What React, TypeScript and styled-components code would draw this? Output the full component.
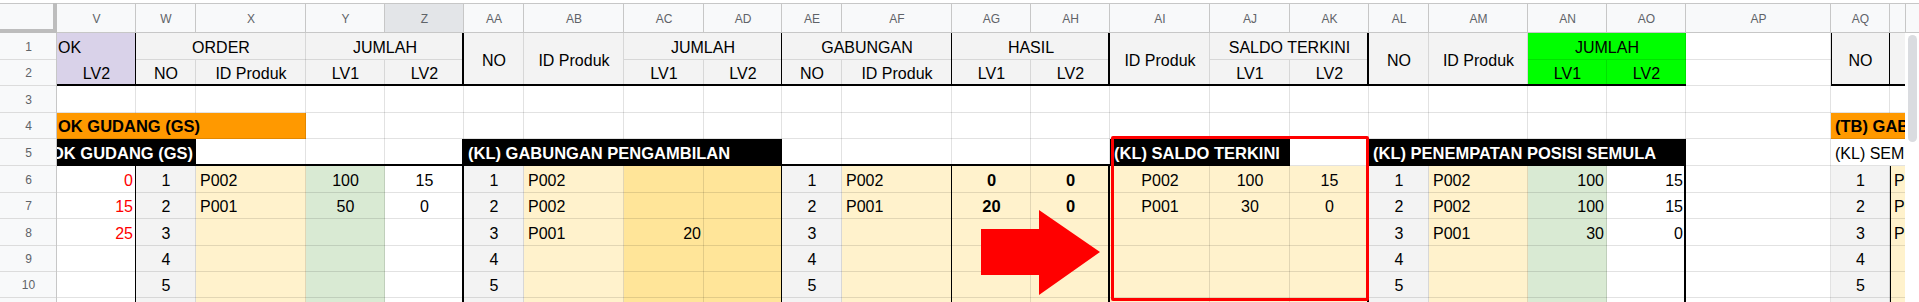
import React from 'react';
import styled, { createGlobalStyle } from 'styled-components';

const GlobalStyle = createGlobalStyle`
  html, body { margin: 0; padding: 0; background: #fff; }
  body { font-family: "Liberation Sans", Arial, sans-serif; }
  * { box-sizing: border-box; }
`;

type Edge = 'grid' | 'none' | 'line' | 'thick';
type Align = 'left' | 'center' | 'right';

interface Spec {
  col: string;
  span?: number;
  rspan?: number;
  text?: string;
  bg?: string;
  align?: Align;
  bold?: boolean;
  color?: string;
  r?: Edge;
  b?: Edge;
  l?: Edge;
  middle?: boolean;
  shift?: number;
}

const C = {
  head: '#f3f3f3',
  purple: '#d9d2e9',
  orange: '#ff9900',
  yellow: '#fff2cc',
  gold: '#ffe599',
  mint: '#d9ead3',
  lime: '#00ff00',
  black: '#000000',
  white: '#ffffff',
  red: '#ff0000',
};

const COLS: [string, number][] = [
  ['V', 79], ['W', 60], ['X', 110], ['Y', 79], ['Z', 79],
  ['AA', 60], ['AB', 100], ['AC', 80], ['AD', 78],
  ['AE', 60], ['AF', 110], ['AG', 79], ['AH', 79],
  ['AI', 100], ['AJ', 80], ['AK', 79],
  ['AL', 60], ['AM', 99], ['AN', 79], ['AO', 79],
  ['AP', 145], ['AQ', 59], ['AR', 100],
];
const ROW_HEIGHTS = [27, 26, 27, 26, 27, 27, 26, 27, 26, 26, 26];

const COL_TEMPLATE = ['57px', ...COLS.map(([, w]) => `${w}px`)].join(' ');
const ROW_TEMPLATE = ['30px', ...ROW_HEIGHTS.map((h) => `${h}px`)].join(' ');

const GRID_LINE = 'rgba(0,0,0,0.115)';

function gridShadow(r: Edge, b: Edge): string {
  const s: string[] = [];
  if (r === 'grid') s.push(`inset -1px 0 0 ${GRID_LINE}`);
  if (b === 'grid') s.push(`inset 0 -1px 0 ${GRID_LINE}`);
  return s.length ? s.join(', ') : 'none';
}

function edgeShadow(r: Edge, b: Edge, l: Edge): string {
  const s: string[] = [];
  if (r === 'thick') s.push('1px 0 0 0 #000', 'inset -2px 0 0 #000');
  if (b === 'thick') s.push('0 1px 0 0 #000', 'inset 0 -2px 0 #000');
  if (l === 'thick') s.push('-2px 0 0 0 #000', 'inset 1px 0 0 #000');
  if (r === 'line') s.push('inset -1px 0 0 #000');
  if (l === 'line') s.push('inset 1px 0 0 #000');
  return s.length ? s.join(', ') : 'none';
}

const Page = styled.div`
  width: 1919px;
  height: 302px;
  overflow: hidden;
  background: #fff;
  display: flex;
  flex-direction: column;
  font-family: "Liberation Sans", Arial, sans-serif;
`;

const TopStrip = styled.div`
  height: 3px;
  flex: none;
  background: #fff;
`;

const Body = styled.div`
  display: flex;
  flex: 1;
  min-height: 0;
`;

const Viewport = styled.div`
  position: relative;
  width: 1905px;
  flex: none;
  overflow: hidden;
`;

const SheetGrid = styled.div`
  display: grid;
  grid-template-columns: ${COL_TEMPLATE};
  grid-template-rows: ${ROW_TEMPLATE};
  width: max-content;
`;

const Corner = styled.div`
  background: #f8f9fa;
  box-shadow: inset -4px 0 0 #bdbdbd, inset 0 -4px 0 #bdbdbd, inset 0 1px 0 #c7c7c7;
`;

const ColHead = styled.div<{ $active: boolean }>`
  background: ${(p) => (p.$active ? '#e3e5e8' : '#f8f9fa')};
  color: #5f6368;
  font-size: 12px;
  display: flex;
  align-items: center;
  justify-content: center;
  padding-top: 2px;
  box-shadow: inset -1px 0 0 #c7c7c7, inset 0 -1px 0 #c7c7c7, inset 0 1px 0 #c7c7c7;
`;

const RowHead = styled.div`
  background: #f8f9fa;
  color: #5f6368;
  font-size: 12px;
  display: flex;
  align-items: center;
  justify-content: center;
  box-shadow: inset -1px 0 0 #c7c7c7, inset 0 -1px 0 #dcdcdc;
`;

interface CellProps {
  $span: number;
  $rspan: number;
  $bg: string;
  $align: Align;
  $bold: boolean;
  $color: string;
  $middle: boolean;
  $grid: string;
  $edge: string;
}

const Cell = styled.div<CellProps>`
  grid-column: span ${(p) => p.$span};
  grid-row: span ${(p) => p.$rspan};
  position: relative;
  display: flex;
  align-items: ${(p) => (p.$middle ? 'center' : 'flex-end')};
  justify-content: ${(p) =>
    p.$align === 'left' ? 'flex-start' : p.$align === 'right' ? 'flex-end' : 'center'};
  padding: ${(p) => (p.$middle ? '2px' : '0')} ${(p) => (p.$align === 'right' ? '3px' : '4px')}
    ${(p) => (p.$middle ? '0' : '3px')} 4px;
  overflow: hidden;
  white-space: nowrap;
  background: ${(p) => p.$bg};
  color: ${(p) => p.$color};
  font-size: ${(p) => (p.$bold ? '16.5px' : '16px')};
  font-weight: ${(p) => (p.$bold ? 700 : 400)};
  box-shadow: ${(p) => p.$grid};

  &::after {
    content: '';
    position: absolute;
    inset: 0;
    z-index: 2;
    pointer-events: none;
    box-shadow: ${(p) => p.$edge};
  }
`;

const CellText = styled.span<{ $shift: number }>`
  flex: none;
  margin-left: ${(p) => p.$shift}px;
  line-height: normal;
`;

const RedFrame = styled.div`
  position: absolute;
  left: 1111px;
  top: 133px;
  width: 258px;
  height: 165px;
  border: 3px solid #ff0000;
  border-radius: 2px;
  z-index: 5;
  pointer-events: none;
`;

const ArrowMark = styled.svg`
  position: absolute;
  left: 981px;
  top: 207px;
  z-index: 5;
  pointer-events: none;
`;

const ScrollColumn = styled.div`
  width: 14px;
  flex: none;
  display: flex;
  flex-direction: column;
  background: #fff;
`;

const ScrollHead = styled.div`
  height: 30px;
  flex: none;
  background: #f8f9fa;
  box-shadow: inset 1px 0 0 #c7c7c7, inset 0 -1px 0 #c7c7c7, inset 0 1px 0 #c7c7c7;
`;

const ScrollTrack = styled.div`
  flex: 1;
  padding: 2px 2px 0 3px;
`;

const ScrollThumb = styled.div`
  height: 107px;
  border-radius: 5px;
  background: #dadce0;
`;

/* ---------- sheet content ---------- */

const ROW_SPECS: Record<number, Spec[]> = {
  1: [
    { col: 'V', text: 'OK', bg: C.purple, align: 'left', shift: -3, r: 'line', b: 'none' },
    { col: 'W', span: 2, text: 'ORDER', bg: C.head },
    { col: 'Y', span: 2, text: 'JUMLAH', bg: C.head, r: 'thick' },
    { col: 'AA', rspan: 2, text: 'NO', bg: C.head, middle: true, b: 'thick' },
    { col: 'AB', rspan: 2, text: 'ID Produk', bg: C.head, middle: true, b: 'thick' },
    { col: 'AC', span: 2, text: 'JUMLAH', bg: C.head, r: 'line' },
    { col: 'AE', span: 2, text: 'GABUNGAN', bg: C.head, r: 'line' },
    { col: 'AG', span: 2, text: 'HASIL', bg: C.head, r: 'thick' },
    { col: 'AI', rspan: 2, text: 'ID Produk', bg: C.head, middle: true, b: 'thick' },
    { col: 'AJ', span: 2, text: 'SALDO TERKINI', bg: C.head, r: 'thick' },
    { col: 'AL', rspan: 2, text: 'NO', bg: C.head, middle: true, b: 'thick' },
    { col: 'AM', rspan: 2, text: 'ID Produk', bg: C.head, middle: true, b: 'thick' },
    { col: 'AN', span: 2, text: 'JUMLAH', bg: C.lime },
    { col: 'AQ', rspan: 2, text: 'NO', bg: C.head, middle: true, b: 'thick', l: 'thick', r: 'line' },
    { col: 'AR', rspan: 2, text: 'ID Produk', bg: C.head, middle: true, b: 'thick' },
  ],
  2: [
    { col: 'V', text: 'LV2', bg: C.purple, r: 'line', b: 'thick' },
    { col: 'W', text: 'NO', bg: C.head, b: 'thick' },
    { col: 'X', text: 'ID Produk', bg: C.head, b: 'thick' },
    { col: 'Y', text: 'LV1', bg: C.head, b: 'thick' },
    { col: 'Z', text: 'LV2', bg: C.head, b: 'thick', r: 'thick' },
    { col: 'AC', text: 'LV1', bg: C.head, b: 'thick' },
    { col: 'AD', text: 'LV2', bg: C.head, b: 'thick', r: 'line' },
    { col: 'AE', text: 'NO', bg: C.head, b: 'thick' },
    { col: 'AF', text: 'ID Produk', bg: C.head, b: 'thick', r: 'line' },
    { col: 'AG', text: 'LV1', bg: C.head, b: 'thick' },
    { col: 'AH', text: 'LV2', bg: C.head, b: 'thick', r: 'thick' },
    { col: 'AJ', text: 'LV1', bg: C.head, b: 'thick' },
    { col: 'AK', text: 'LV2', bg: C.head, b: 'thick', r: 'thick' },
    { col: 'AN', text: 'LV1', bg: C.lime, b: 'thick' },
    { col: 'AO', text: 'LV2', bg: C.lime, b: 'thick' },
  ],
  3: [],
  4: [
    { col: 'V', span: 3, text: 'OK GUDANG (GS)', bg: C.orange, bold: true, align: 'left', shift: -3 },
    { col: 'AQ', span: 2, text: '(TB) GABUNGAN', bg: C.orange, bold: true, align: 'left' },
  ],
  5: [
    { col: 'V', span: 2, text: 'OK GUDANG (GS)', bg: C.black, color: C.white, bold: true, align: 'left', shift: -10, b: 'thick' },
    { col: 'X', b: 'thick' },
    { col: 'Y', b: 'thick' },
    { col: 'Z', b: 'thick', r: 'thick' },
    { col: 'AA', span: 4, text: '(KL) GABUNGAN PENGAMBILAN', bg: C.black, color: C.white, bold: true, align: 'left', b: 'thick' },
    { col: 'AE', b: 'thick' },
    { col: 'AF', b: 'thick' },
    { col: 'AG', b: 'thick' },
    { col: 'AH', b: 'thick' },
    { col: 'AI', span: 2, text: '(KL) SALDO TERKINI', bg: C.black, color: C.white, bold: true, align: 'left' },
    { col: 'AL', span: 4, text: '(KL) PENEMPATAN POSISI SEMULA', bg: C.black, color: C.white, bold: true, align: 'left', b: 'thick' },
    { col: 'AQ', span: 2, text: '(KL) SEMULA', align: 'left' },
  ],
};

interface DataCol {
  bg: string;
  align?: Align;
  bold?: boolean;
  color?: string;
  r?: Edge;
  l?: Edge;
  values?: string[];
}

const NUMS = ['1', '2', '3', '4', '5'];

const DATA: Record<string, DataCol> = {
  V: { bg: C.white, align: 'right', color: C.red, r: 'line', values: ['0', '15', '25'] },
  W: { bg: C.head, values: NUMS },
  X: { bg: C.yellow, align: 'left', values: ['P002', 'P001'] },
  Y: { bg: C.mint, values: ['100', '50'] },
  Z: { bg: C.white, r: 'thick', values: ['15', '0'] },
  AA: { bg: C.head, values: NUMS },
  AB: { bg: C.yellow, align: 'left', values: ['P002', 'P002', 'P001'] },
  AC: { bg: C.gold, align: 'right', values: ['', '', '20'] },
  AD: { bg: C.gold, r: 'line' },
  AE: { bg: C.head, values: NUMS },
  AF: { bg: C.yellow, align: 'left', r: 'line', values: ['P002', 'P001'] },
  AG: { bg: C.yellow, bold: true, values: ['0', '20'] },
  AH: { bg: C.yellow, bold: true, r: 'thick', values: ['0', '0'] },
  AI: { bg: C.yellow, values: ['P002', 'P001'] },
  AJ: { bg: C.yellow, values: ['100', '30'] },
  AK: { bg: C.yellow, r: 'thick', values: ['15', '0'] },
  AL: { bg: C.head, values: NUMS },
  AM: { bg: C.yellow, align: 'left', values: ['P002', 'P002', 'P001'] },
  AN: { bg: C.mint, align: 'right', values: ['100', '100', '30'] },
  AO: { bg: C.white, align: 'right', r: 'thick', values: ['15', '15', '0'] },
  AP: { bg: C.white },
  AQ: { bg: C.head, values: NUMS },
  AR: { bg: C.yellow, align: 'left', l: 'line', values: ['P002', 'P002', 'P001'] },
};

for (let r = 6; r <= 11; r++) {
  ROW_SPECS[r] = COLS.map(([key]) => {
    const d = DATA[key];
    return {
      col: key,
      bg: d.bg,
      align: d.align ?? 'center',
      bold: d.bold,
      color: d.color,
      r: d.r,
      l: d.l,
      text: r <= 10 ? d.values?.[r - 6] ?? '' : '',
    };
  });
}

function renderRow(rowNo: number, covered: Set<string>) {
  const specs = ROW_SPECS[rowNo] ?? [];
  const byCol = new Map(specs.map((s) => [s.col, s]));
  const out: React.ReactNode[] = [
    <RowHead key={`h${rowNo}`}>{rowNo}</RowHead>,
  ];
  let ci = 0;
  while (ci < COLS.length) {
    const key = COLS[ci][0];
    if (covered.has(`${rowNo}:${ci}`)) {
      ci += 1;
      continue;
    }
    const s: Spec = byCol.get(key) ?? { col: key };
    const span = s.span ?? 1;
    const rspan = s.rspan ?? 1;
    for (let rr = 1; rr < rspan; rr++) {
      for (let cc = 0; cc < span; cc++) covered.add(`${rowNo + rr}:${ci + cc}`);
    }
    const r = s.r ?? 'grid';
    const b = s.b ?? 'grid';
    const l = s.l ?? 'none';
    out.push(
      <Cell
        key={`${rowNo}-${key}`}
        $span={span}
        $rspan={rspan}
        $bg={s.bg ?? C.white}
        $align={s.align ?? 'center'}
        $bold={!!s.bold}
        $color={s.color ?? '#000'}
        $middle={!!s.middle}
        $grid={gridShadow(r, b)}
        $edge={edgeShadow(r, b, l)}
      >
        {s.text ? <CellText $shift={s.shift ?? 0}>{s.text}</CellText> : null}
      </Cell>
    );
    ci += span;
  }
  return out;
}

export default function App() {
  const covered = new Set<string>();
  const rows: React.ReactNode[] = [];
  for (let r = 1; r <= ROW_HEIGHTS.length; r++) rows.push(...renderRow(r, covered));

  return (
    <>
      <GlobalStyle />
      <Page>
        <TopStrip />
        <Body>
          <Viewport>
            <SheetGrid>
              <Corner />
              {COLS.map(([key]) => (
                <ColHead key={key} $active={key === 'Z'}>
                  {key}
                </ColHead>
              ))}
              {rows}
            </SheetGrid>
            <RedFrame />
            <ArrowMark width="119" height="85" viewBox="0 0 119 85">
              <polygon points="0,19 58,19 58,0 119,42 58,85 58,65 0,65" fill="#ff0000" />
            </ArrowMark>
          </Viewport>
          <ScrollColumn>
            <ScrollHead />
            <ScrollTrack>
              <ScrollThumb />
            </ScrollTrack>
          </ScrollColumn>
        </Body>
      </Page>
    </>
  );
}
